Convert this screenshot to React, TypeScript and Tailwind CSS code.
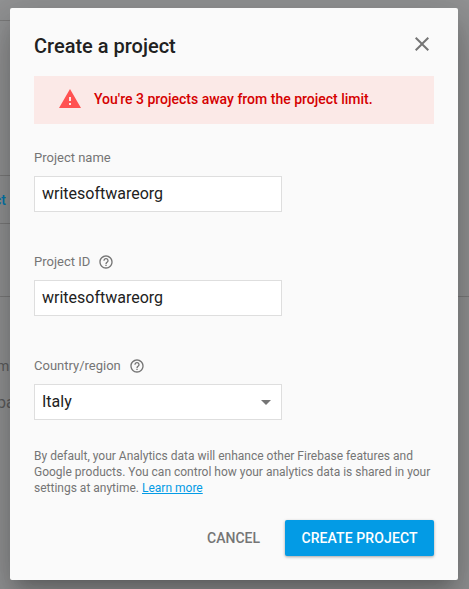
import type { ReactNode } from "react";

function HelpIcon() {
  return (
    <svg viewBox="0 0 24 24" className="ml-2 size-4 fill-[#757575]" aria-hidden="true">
      <path d="M11 18h2v-2h-2v2zm1-16C6.48 2 2 6.48 2 12s4.48 10 10 10 10-4.48 10-10S17.52 2 12 2zm0 18c-4.41 0-8-3.59-8-8s3.59-8 8-8 8 3.59 8 8-3.59 8-8 8zm0-14c-2.21 0-4 1.79-4 4h2c0-1.1.9-2 2-2s2 .9 2 2c0 2-3 1.75-3 5h2c0-2.25 3-2.5 3-5 0-2.21-1.79-4-4-4z" />
    </svg>
  );
}

function Field({ label, help, children }: { label: string; help?: boolean; children: ReactNode }) {
  return (
    <div className="mb-9 h-[68px]">
      <div className="flex h-5 items-center text-[13px] text-[#757575]">
        {label}
        {help && <HelpIcon />}
      </div>
      <div className="mt-2 flex h-9 w-[248px] items-center justify-between border border-[#dedede] bg-white px-[7px] text-base text-[#212121]">
        {children}
      </div>
    </div>
  );
}

/* The dimmed project page that stays visible around the dialog. */
function PageBehind() {
  return (
    <div className="h-full overflow-hidden pt-5 text-sm">
      <div className="h-[155px] w-5 border-t border-[#7b7b7b]" />
      <div className="flex h-12 w-5 items-center border-t border-[#7b7b7b] font-medium text-[#0478ad]">
        <span className="-ml-1.5 pt-px">ct</span>
      </div>
      <div className="h-[73px] w-5 border-t border-[#7b7b7b]" />
      <div className="border-t border-[#7b7b7b] pt-[59px] text-[#5c5c5d]">
        <div className="-ml-[3px] leading-5">m</div>
        <div className="-ml-[3px] mt-[17px] text-base leading-5">pa</div>
      </div>
    </div>
  );
}

export default function App() {
  return (
    <div className="relative h-[589px] w-[469px] overflow-hidden bg-[#929394] font-['Roboto',sans-serif]">
      <PageBehind />
      <div
        role="dialog"
        className="absolute left-[10px] top-2 h-[572px] w-[448px] rounded-[2px] bg-[#fafafa] px-6 pt-6 shadow-[0_11px_15px_-7px_rgba(0,0,0,0.2),0_24px_38px_3px_rgba(0,0,0,0.14),0_9px_46px_8px_rgba(0,0,0,0.12)]"
      >
        <div className="flex h-11 items-start justify-between">
          <h1 className="text-xl leading-7 font-medium text-[#212121]">Create a project</h1>
          <button type="button" aria-label="Close">
            <svg viewBox="0 0 24 24" className="size-6 fill-[#757575]">
              <path d="M19 6.41L17.59 5 12 10.59 6.41 5 5 6.41 10.59 12 5 17.59 6.41 19 12 13.41 17.59 19 19 17.59 13.41 12z" />
            </svg>
          </button>
        </div>
        <div className="mb-6 flex h-12 items-center bg-[#fbe9e7] pb-0.5 pl-6 text-sm font-medium text-[#d50000]">
          <svg viewBox="0 0 24 24" className="mr-3 size-6 fill-[#ff5252]" aria-hidden="true">
            <path d="M1 21h22L12 2 1 21zm12-3h-2v-2h2v2zm0-4h-2v-4h2v4z" />
          </svg>
          You're 3 projects away from the project limit.
        </div>
        <Field label="Project name">writesoftwareorg</Field>
        <Field label="Project ID" help>
          writesoftwareorg
        </Field>
        <Field label="Country/region" help>
          Italy
          <svg viewBox="0 0 10 5" className="mr-[3px] h-[5px] w-[10px] fill-[#757575]" aria-hidden="true">
            <path d="M0 0h10L5 5z" />
          </svg>
        </Field>
        <p className="-mt-3 text-xs leading-4 whitespace-nowrap text-[#757575]">
          By default, your Analytics data will enhance other Firebase features and
          <br />
          Google products. You can control how your analytics data is shared in your
          <br />
          settings at anytime.{" "}
          <a href="#" className="text-[#039be5] underline">
            Learn more
          </a>
        </p>
        <div className="mt-6 flex justify-end gap-[9px] text-sm font-medium">
          <button type="button" className="h-9 px-4 text-[#757575]">
            CANCEL
          </button>
          <button
            type="button"
            className="h-9 w-[149px] rounded-[2px] bg-[#039be5] tracking-[0.1px] text-white shadow-[0_1px_3px_rgba(0,0,0,0.35)]"
          >
            CREATE PROJECT
          </button>
        </div>
      </div>
    </div>
  );
}
